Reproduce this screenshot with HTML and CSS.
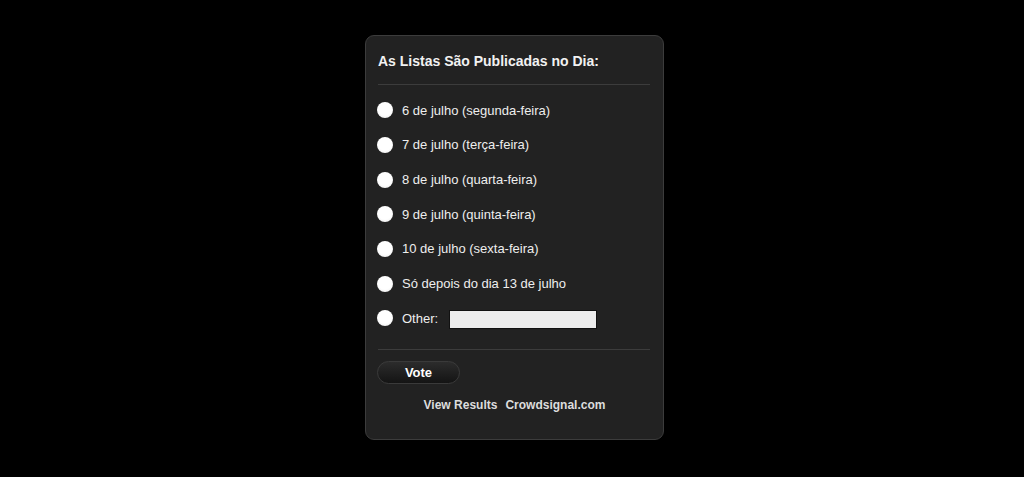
FILE: index.html
```html
<!DOCTYPE html>
<html>
<head>
<meta charset="utf-8">
<link rel="stylesheet" href="styles.css">
</head>
<body>
<div class="poll">
  <div class="poll-title">As Listas São Publicadas no Dia:</div>
  <div class="divider"></div>
  <ul class="answers">
    <li class="answer"><span class="radio"></span><span class="label">6 de julho (segunda-feira)</span></li>
    <li class="answer"><span class="radio"></span><span class="label">7 de julho (terça-feira)</span></li>
    <li class="answer"><span class="radio"></span><span class="label">8 de julho (quarta-feira)</span></li>
    <li class="answer"><span class="radio"></span><span class="label">9 de julho (quinta-feira)</span></li>
    <li class="answer"><span class="radio"></span><span class="label">10 de julho (sexta-feira)</span></li>
    <li class="answer"><span class="radio"></span><span class="label">Só depois do dia 13 de julho</span></li>
    <li class="answer"><span class="radio"></span><span class="label">Other:</span><span class="other-input"></span></li>
  </ul>
  <div class="divider divider-bottom"></div>
  <div class="actions"><span class="vote-btn">Vote</span></div>
  <div class="footer"><span class="link">View Results</span><span class="link">Crowdsignal.com</span></div>
</div>
</body>
</html>
```
FILE: styles.css
```css
html, body {
  margin: 0;
  padding: 0;
  background: #000;
}
body {
  font-family: "Liberation Sans", Arial, sans-serif;
}
.poll {
  box-sizing: border-box;
  width: 299px;
  height: 405px;
  margin: 35px 0 0 365px;
  background: #222;
  border: 1px solid #3c3c3c;
  border-radius: 9px;
  padding: 17px 13px 0 11px;
  color: #eee;
}
.poll-title {
  font-size: 14px;
  font-weight: bold;
  line-height: 17px;
  color: #f2f2f2;
  padding-left: 1px;
}
.divider {
  height: 1px;
  background: #3c3c3c;
  margin-top: 14px;
  margin-left: 1px;
}
.answers {
  list-style: none;
  margin: 8px 0 0 0;
  padding: 0;
}
.answer {
  display: flex;
  align-items: center;
  height: 34.67px;
  font-size: 13px;
  color: #eee;
}
.radio {
  width: 16px;
  height: 16px;
  border-radius: 50%;
  background: radial-gradient(circle at 50% 40%, #fff 55%, #e6e6e6 100%);
  margin-right: 9px;
  flex: none;
}
.label {
  line-height: 15px;
}
.other-input {
  display: block;
  box-sizing: border-box;
  width: 148px;
  height: 19px;
  margin-left: 11px;
  background: #ececec;
  border: 1px solid #111;
  margin-top: 2px;
}
.divider-bottom {
  margin-top: 13px;
}
.actions {
  margin-top: 11px;
}
.vote-btn {
  display: inline-flex;
  align-items: center;
  justify-content: center;
  box-sizing: border-box;
  width: 83px;
  height: 23px;
  border-radius: 12px;
  border: 1px solid #3a3a3a;
  background: linear-gradient(#2c2c2c, #141414);
  color: #fff;
  font-size: 13px;
  font-weight: bold;
}
.footer {
  display: flex;
  justify-content: center;
  gap: 8px;
  margin-top: 14px;
  font-size: 12px;
  font-weight: bold;
  line-height: 14px;
  color: #ddd;
  padding-left: 2px;
}
```
